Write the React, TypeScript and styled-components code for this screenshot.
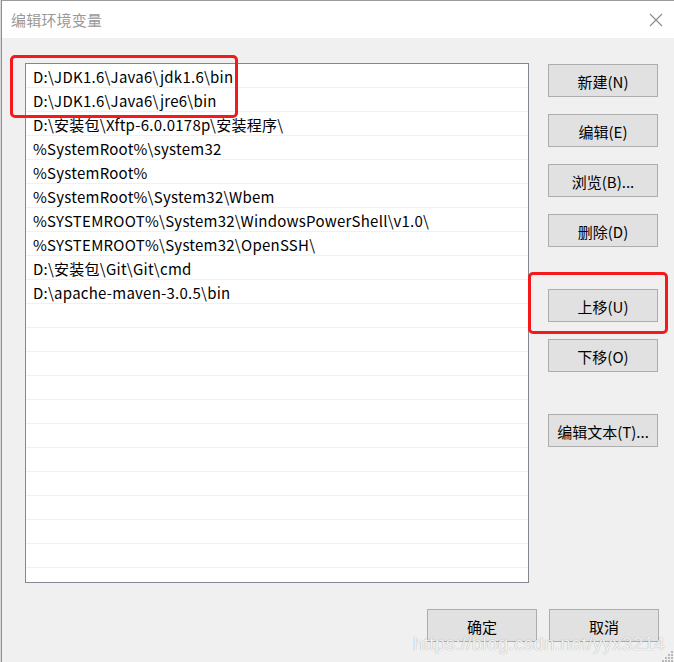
import React from "react";
import styled, { createGlobalStyle } from "styled-components";

const GlobalStyle = createGlobalStyle`
  html, body {
    margin: 0;
    padding: 0;
    background: #d9d9d9;
  }
  body {
    font-family: "Noto Sans CJK SC", "Noto Sans", sans-serif;
    overflow: hidden;
  }
`;

const Window = styled.div`
  position: relative;
  box-sizing: border-box;
  width: 673px;
  height: 662px;
  margin-left: 1px;
  border-top: 1px solid #9b9b9b;
  border-left: 1px solid #8f8f8f;
  background: #f0f0f0;
  display: flex;
  flex-direction: column;
  overflow: hidden;
`;

const TitleBar = styled.div`
  height: 37px;
  background: #ffffff;
  display: flex;
  align-items: center;
  justify-content: space-between;
  padding: 0 10px 0 9px;
`;

const Title = styled.span`
  font-size: 15px;
  color: #999999;
  letter-spacing: 0.2px;
`;

const CloseIcon = styled.svg`
  width: 14px;
  height: 14px;
  margin-right: 1px;
`;

const Body = styled.div`
  flex: 1;
  display: flex;
  flex-direction: column;
  padding: 25px 15px 0 23px;
`;

const Main = styled.div`
  display: flex;
  align-items: flex-start;
`;

const List = styled.div`
  box-sizing: border-box;
  width: 504px;
  height: 520px;
  border: 1px solid #828790;
  background: #ffffff;
  overflow: hidden;
`;

const Row = styled.div`
  box-sizing: border-box;
  height: 24px;
  padding: 2px 0 0 7px;
  border-bottom: 1px solid #f0f0f0;
  display: flex;
  align-items: center;
  font-size: 15px;
  letter-spacing: 0.25px;
  color: #000000;
  white-space: nowrap;
`;

const Side = styled.div`
  display: flex;
  flex-direction: column;
  margin-left: 19px;
  padding-top: 1px;
`;

const Group = styled.div<{ $gapTop?: number }>`
  display: flex;
  flex-direction: column;
  gap: 17px;
  margin-top: ${({ $gapTop }) => $gapTop ?? 0}px;
`;

const Button = styled.button`
  box-sizing: border-box;
  width: 110px;
  height: 33px;
  border: 1px solid #adadad;
  background: #e1e1e1;
  font-family: "Noto Sans CJK SC", "Noto Sans", sans-serif;
  font-size: 15px;
  color: #000000;
  padding: 1px 0 0;
  display: flex;
  align-items: center;
  justify-content: center;
`;

const Footer = styled.div`
  display: flex;
  justify-content: flex-end;
  gap: 12px;
  margin-top: 26px;
`;

const Highlight = styled.div<{ $l: number; $t: number; $w: number; $h: number }>`
  position: absolute;
  box-sizing: border-box;
  left: ${({ $l }) => $l}px;
  top: ${({ $t }) => $t}px;
  width: ${({ $w }) => $w}px;
  height: ${({ $h }) => $h}px;
  border: 3px solid #f5191c;
  border-radius: 5px;
  pointer-events: none;
`;

const Watermark = styled.div`
  position: absolute;
  right: 9px;
  bottom: 8px;
  font-family: "Liberation Sans", Arial, sans-serif;
  font-size: 19px;
  line-height: 20px;
  color: rgba(255, 255, 255, 0.9);
  text-shadow: 0 0 1px rgba(0, 0, 0, 0.4);
  letter-spacing: 0.2px;
  pointer-events: none;
`;

const Grip = styled.svg`
  position: absolute;
  right: 0;
  bottom: 0;
  width: 12px;
  height: 12px;
`;

const paths = [
  "D:\\JDK1.6\\Java6\\jdk1.6\\bin",
  "D:\\JDK1.6\\Java6\\jre6\\bin",
  "D:\\安装包\\Xftp-6.0.0178p\\安装程序\\",
  "%SystemRoot%\\system32",
  "%SystemRoot%",
  "%SystemRoot%\\System32\\Wbem",
  "%SYSTEMROOT%\\System32\\WindowsPowerShell\\v1.0\\",
  "%SYSTEMROOT%\\System32\\OpenSSH\\",
  "D:\\安装包\\Git\\Git\\cmd",
  "D:\\apache-maven-3.0.5\\bin",
];

const rows = [...paths, ...Array(13).fill("")];

export default function App() {
  return (
    <>
      <GlobalStyle />
      <Window>
        <TitleBar>
          <Title>编辑环境变量</Title>
          <CloseIcon viewBox="0 0 14 14">
            <path d="M1 1 L13 13 M13 1 L1 13" stroke="#8a8a8a" strokeWidth="1.1" />
          </CloseIcon>
        </TitleBar>
        <Body>
          <Main>
            <List>
              {rows.map((text, i) => (
                <Row key={i}>{text}</Row>
              ))}
            </List>
            <Side>
              <Group>
                <Button>新建(N)</Button>
                <Button>编辑(E)</Button>
                <Button>浏览(B)...</Button>
                <Button>删除(D)</Button>
              </Group>
              <Group $gapTop={42}>
                <Button>上移(U)</Button>
                <Button>下移(O)</Button>
              </Group>
              <Group $gapTop={42}>
                <Button>编辑文本(T)...</Button>
              </Group>
            </Side>
          </Main>
          <Footer>
            <Button>确定</Button>
            <Button>取消</Button>
          </Footer>
        </Body>
        <Highlight $l={8} $t={54} $w={228} $h={63} />
        <Highlight $l={526} $t={271} $w={140} $h={62} />
        <Watermark>https://blog.csdn.net/yyx3214</Watermark>
        <Grip viewBox="0 0 12 12">
          {[
            [9, 1], [6, 4], [9, 4], [3, 7], [6, 7], [9, 7], [0, 10], [3, 10], [6, 10], [9, 10],
          ].map(([x, y], i) => (
            <rect key={i} x={x} y={y} width="2" height="2" fill="#b8b8b8" />
          ))}
        </Grip>
      </Window>
    </>
  );
}
